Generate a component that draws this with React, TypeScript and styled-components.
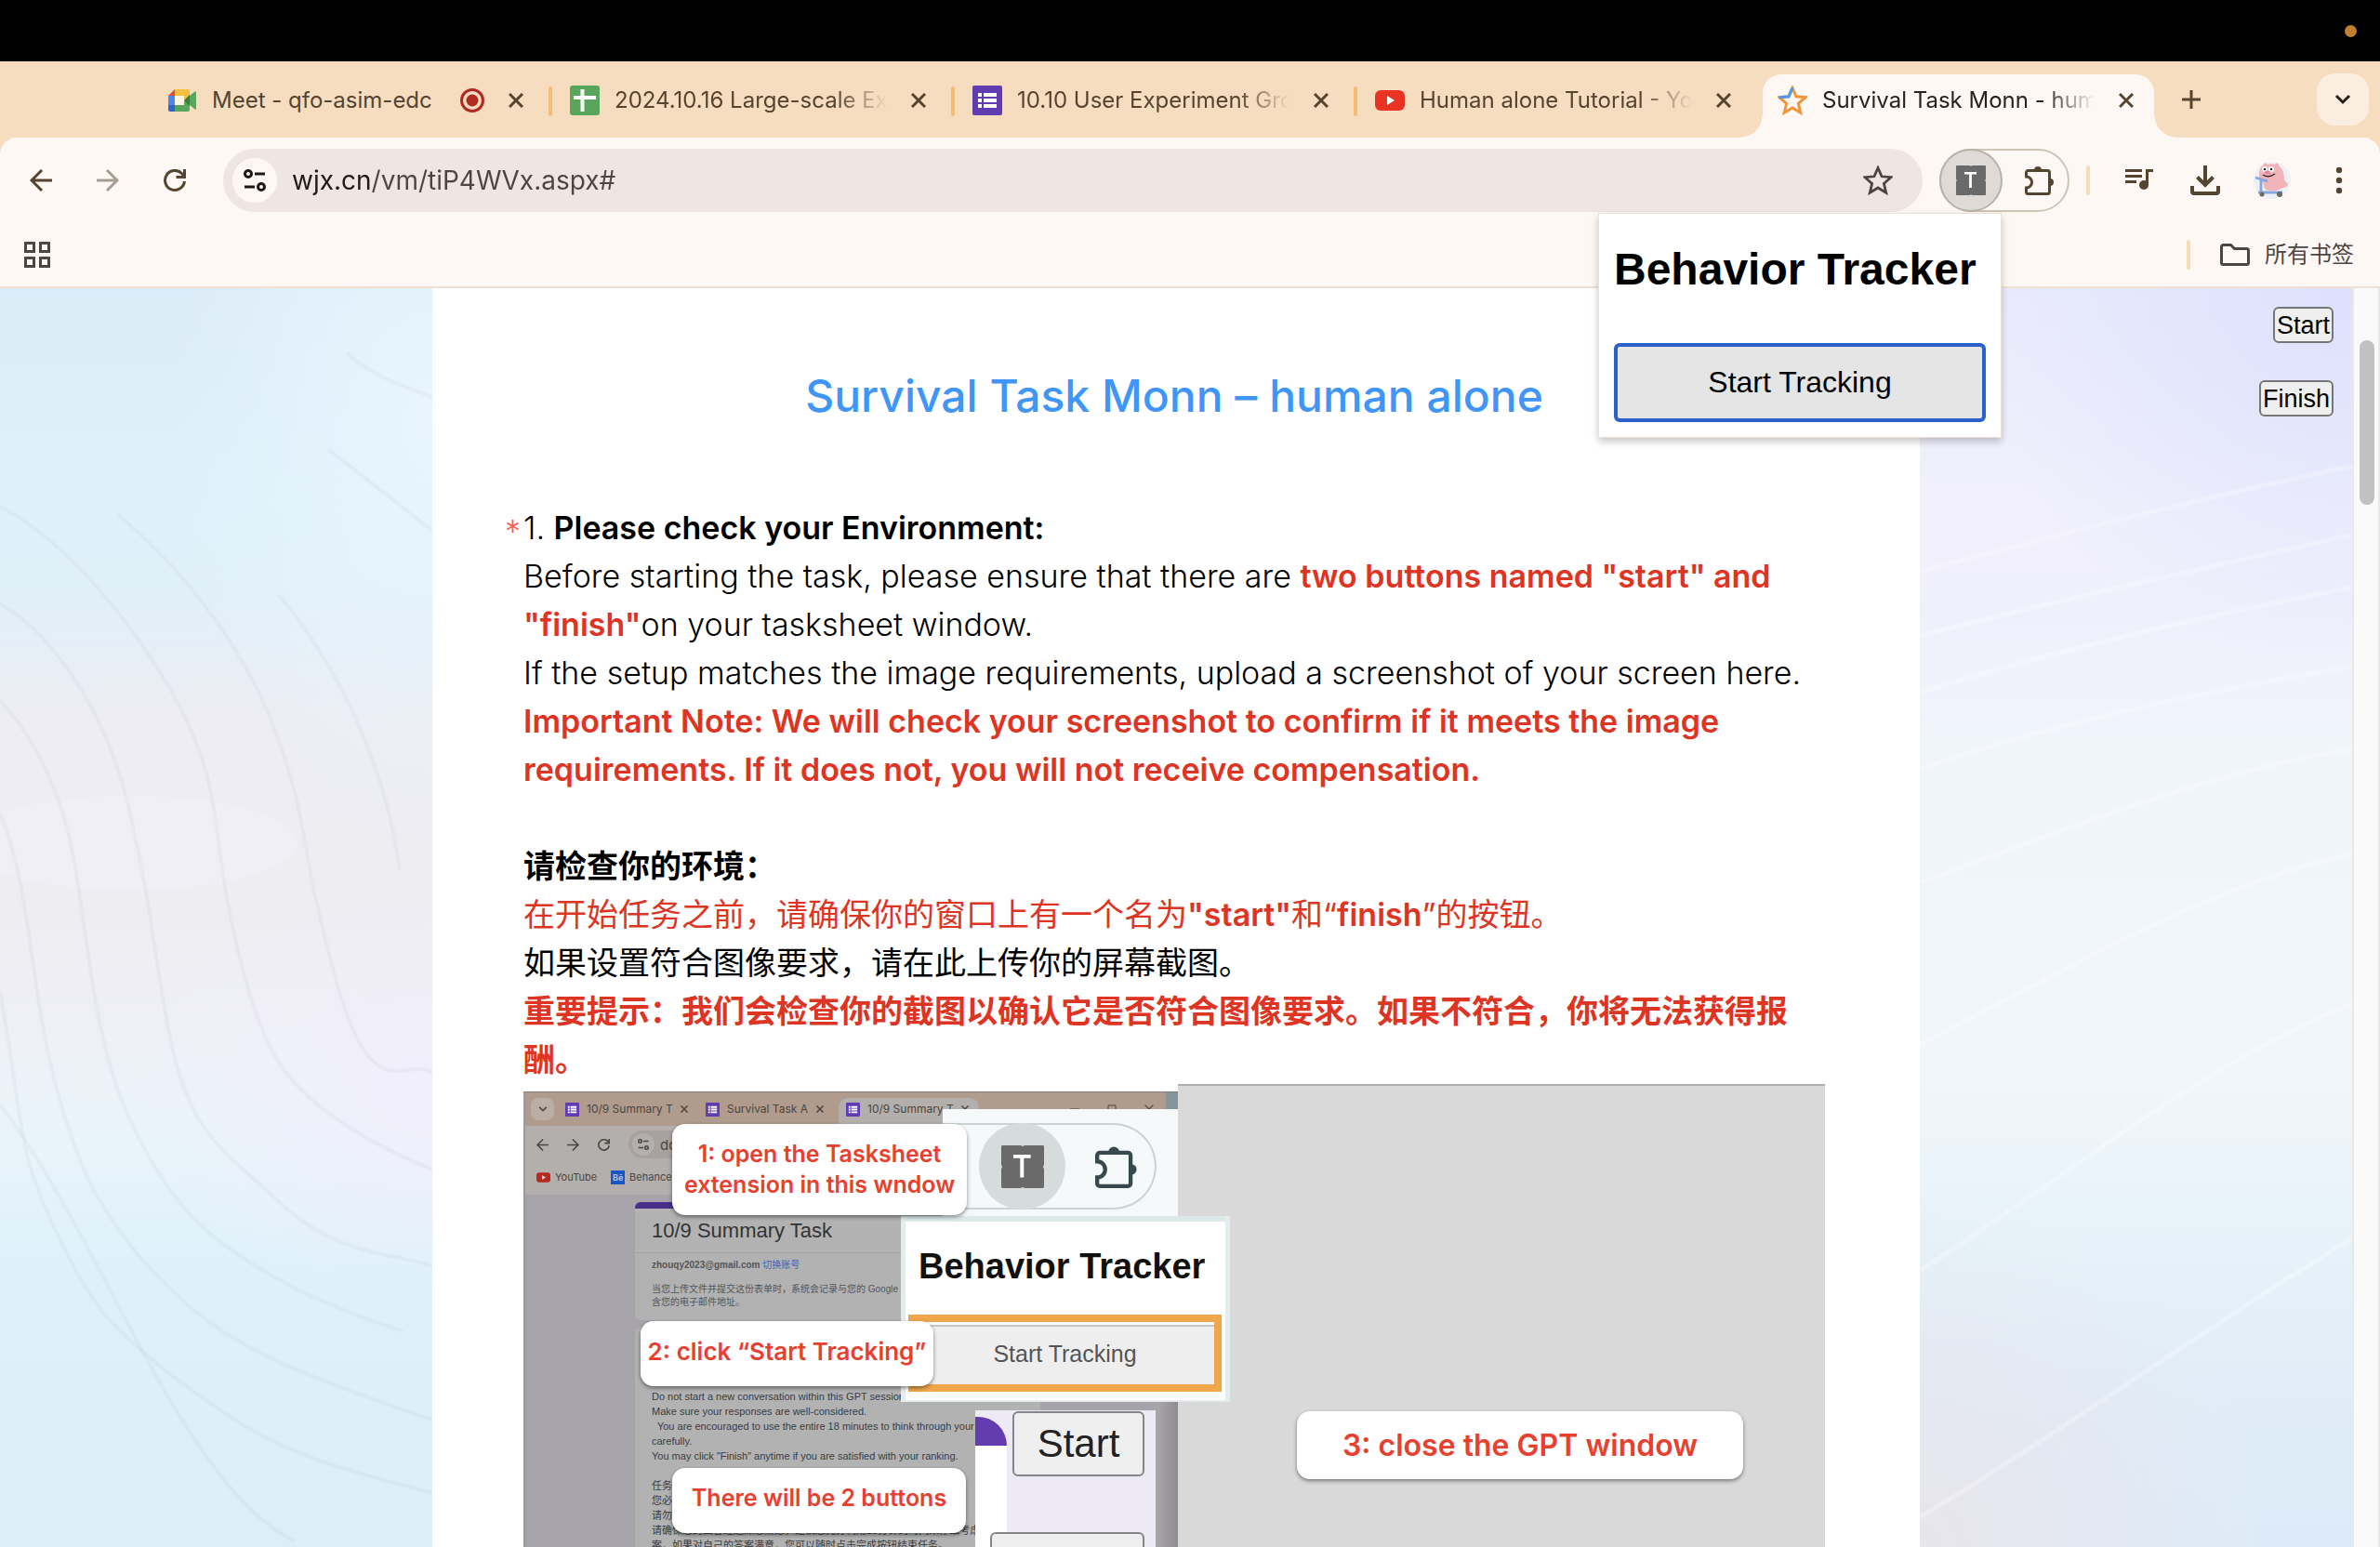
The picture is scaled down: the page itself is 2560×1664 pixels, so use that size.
import React from "react";
import styled, { createGlobalStyle, css } from "styled-components";

const ui = `Inter, "Noto Sans CJK SC", sans-serif`;
const arial = `"Liberation Sans", "Noto Sans CJK SC", sans-serif`;
const cream = "#fdf8f4";
const peach = "#f7ddc0";
const brown = "#554430";
const red = "#de3424";

const Global = createGlobalStyle`
  *, *::before, *::after { box-sizing: border-box; }
  body { margin: 0; background: #fff; font-family: ${ui}; }
  button, input { font: inherit; color: inherit; margin: 0; }
  svg { display: block; flex: none; }
  p, h1, h2 { margin: 0; }
`;

/* ---------- window shell ---------- */

const Window = styled.div`
  height: 100vh;
  display: flex;
  flex-direction: column;
  overflow: hidden;
`;

const MenuBar = styled.header`
  flex: none;
  height: 66px;
  padding: 0 25px;
  display: flex;
  align-items: center;
  justify-content: flex-end;
  background: #000;
`;

const RecordingDot = styled.span`
  width: 13px;
  height: 13px;
  border-radius: 50%;
  background: #c08030;
`;

const IconButton = styled.button`
  flex: none;
  padding: 0;
  border: 0;
  background: none;
  color: ${brown};
  display: flex;
  align-items: center;
  justify-content: center;
  &:disabled {
    opacity: 0.5;
  }
`;

/* ---------- tab strip ---------- */

const TabStrip = styled.nav`
  flex: none;
  height: 82px;
  padding: 0 12px 0 158px;
  display: flex;
  align-items: center;
  background: ${peach};
`;

const Tab = styled.div<{ $active?: boolean; $divided?: boolean }>`
  position: relative;
  z-index: 0;
  flex: 0 1 433px;
  min-width: 0;
  height: 100%;
  padding: 2px 28px 0 22px;
  display: flex;
  align-items: center;
  color: ${(p) => (p.$active ? "#2a211a" : brown)};
  ${(p) =>
    p.$divided &&
    css`
      &::before {
        content: "";
        position: absolute;
        left: -1px;
        top: 27px;
        width: 4px;
        height: 32px;
        border-radius: 2px;
        background: #f5bb77;
      }
    `}
  ${(p) =>
    p.$active &&
    css`
      &::before {
        content: "";
        position: absolute;
        z-index: -1;
        inset: 14px 6px 0 6px;
        border-radius: 20px 20px 0 0;
        background: ${cream};
      }
      &::after {
        content: "";
        position: absolute;
        z-index: -1;
        inset: auto -18px 0 -18px;
        height: 24px;
        background:
          radial-gradient(circle at 0 0, transparent 23px, ${cream} 24px) left / 24px 24px no-repeat,
          radial-gradient(circle at 100% 0, transparent 23px, ${cream} 24px) right / 24px 24px no-repeat;
      }
    `}
`;

const TabTitle = styled.span<{ $fade: boolean }>`
  flex: 1;
  min-width: 0;
  margin: 0 ${(p) => (p.$fade ? 26 : 16)}px 0 16px;
  overflow: hidden;
  white-space: nowrap;
  font-size: 24px;
  line-height: 32px;
  mask-image: ${(p) => (p.$fade ? "linear-gradient(to right, #000 calc(100% - 56px), transparent)" : "none")};
`;

const TabStatus = styled.span`
  margin-right: 26px;
`;

const NewTab = styled(IconButton)`
  margin-left: 24px;
`;

const TabSearch = styled(IconButton)`
  width: 56px;
  height: 56px;
  margin-left: auto;
  border-radius: 20px;
  background: #fbeee1;
  color: #2a211a;
`;

/* ---------- toolbar ---------- */

const Chrome = styled.div`
  flex: none;
  background: linear-gradient(${peach} 24px, ${cream} 24px);
`;

const Toolbar = styled.div`
  height: 92px;
  padding: 0 28px 0 32px;
  display: flex;
  align-items: center;
  border-radius: 18px 18px 0 0;
  background: ${cream};
`;

const NavButtons = styled.div`
  display: flex;
  gap: 48px;
  margin-right: 40px;
`;

const AddressBar = styled.form`
  flex: 1;
  min-width: 0;
  height: 68px;
  padding: 0 32px 0 10px;
  display: flex;
  align-items: center;
  border-radius: 34px;
  background: #efe6e3;
`;

const SiteInfo = styled(IconButton)`
  width: 48px;
  height: 48px;
  border-radius: 50%;
  background: ${cream};
  color: #1f1a17;
`;

const Address = styled.input`
  flex: 1;
  min-width: 0;
  padding: 0 0 0 16px;
  border: 0;
  outline: 0;
  font-size: 28px;
  line-height: 40px;
  color: transparent;
  background: linear-gradient(to right, #1f1a17 100px, #4d4541 100px);
  background-clip: text;
`;

const Extensions = styled.div`
  position: relative;
  width: 140px;
  height: 68px;
  margin: 0 18px;
  display: flex;
  border-radius: 34px;
  border: 2px solid #cfc4b8;
`;

const ExtensionButton = styled(IconButton)`
  width: 68px;
  height: 68px;
  margin: -2px 24px 0 -2px;
  border-radius: 50%;
  border: 2px solid #bab2a8;
  background: #dfdad6;
`;

const Divider = styled.span`
  flex: none;
  width: 4px;
  height: 32px;
  border-radius: 2px;
  background: #f7dcb8;
`;

const Actions = styled.div`
  display: flex;
  align-items: center;
  gap: 36px;
  margin-left: 38px;
`;

const MenuButton = styled(IconButton)`
  width: 32px;
`;

const BookmarkBar = styled.div`
  height: 70px;
  padding: 0 28px 0 26px;
  display: flex;
  align-items: center;
  background: ${cream};
  border-bottom: 2px solid #f0e0d4;
`;

const AllBookmarks = styled(IconButton)`
  gap: 16px;
  margin-left: 32px;
  font-size: 24px;
  line-height: 32px;
  color: #4d4541;
`;

const Spacer = styled.span`
  flex: 1;
`;

/* ---------- extension popup ---------- */

const Popup = styled.section`
  position: absolute;
  z-index: 5;
  top: 67px;
  left: -369px;
  width: 434px;
  height: 242px;
  padding: 32px 16px 16px;
  display: flex;
  flex-direction: column;
  justify-content: space-between;
  background: #fff;
  border: 1px solid #f0e0d4;
  box-shadow: 0 4px 8px rgba(0, 0, 0, 0.22);
  font-family: ${arial};
`;

const PopupTitle = styled.h2`
  font-size: 48px;
  line-height: 56px;
  font-weight: 700;
  white-space: nowrap;
  color: #000;
`;

const TrackButton = styled.button`
  width: 100%;
  height: 85px;
  border: 4px solid #2a60cc;
  border-radius: 6px;
  background: #e5e5e5;
  font-size: 32px;
  color: #000;
`;

/* ---------- page ---------- */

const Page = styled.div`
  flex: 1;
  min-height: 0;
  display: flex;
  overflow: hidden;
`;

const Side = styled.aside<{ $right?: boolean }>`
  position: relative;
  flex: 1;
  min-width: 0;
  padding: 20px 20px 0;
  display: flex;
  flex-direction: column;
  align-items: flex-end;
  gap: 40px;
  background: ${(p) =>
    p.$right
      ? `radial-gradient(ellipse 80% 28% at 0 100%, #e8e5ec, rgba(232, 229, 236, 0)),
         radial-gradient(ellipse 90% 30% at 100% 0, #dde1fc, rgba(221, 225, 252, 0)),
         linear-gradient(#eaebfc, #f1f0fc 17%, #f0f0fc 26%, #f0f5fb 38%, #f1f6fb 62%, #e6f2f9 76%, #dfecf8 90%, #ddebf8)`
      : `radial-gradient(ellipse 70% 16% at 100% 64%, #f1eefb, rgba(241, 238, 251, 0)),
         radial-gradient(ellipse 60% 34% at 100% 10%, #e8f5fe, rgba(232, 245, 254, 0)),
         linear-gradient(#dcecf8, #def1fa 17%, #e0f0f9 24%, #ededf3 34%, #eeedf2 50%, #eff0f6 58%, #e8f4fa 68%, #def1fb 78%, #dceef8)`};
`;

const Waves = styled.svg`
  position: absolute;
  inset: 0;
  width: 100%;
  height: 100%;
  path {
    fill: none;
    vector-effect: non-scaling-stroke;
  }
`;

const RecordButton = styled.button`
  position: relative;
  height: 39px;
  padding: 0 2px;
  border: 2px solid #767676;
  border-radius: 6px;
  background: #efefef;
  font-family: ${arial};
  font-size: 27px;
  line-height: 32px;
  color: #000;
`;

const Sheet = styled.main`
  flex: 0 1 1600px;
  min-width: 0;
  padding: 86px 102px 0 98px;
  background: #fff;
`;

const SheetTitle = styled.h1`
  margin-bottom: 86px;
  text-align: center;
  font-size: 48px;
  line-height: 60px;
  font-weight: 500;
  color: #4096f8;
`;

const Question = styled.div`
  position: relative;
  font-size: 34px;
  line-height: 52px;
  font-weight: 350;
  color: #000;
`;

const Required = styled.span`
  position: absolute;
  left: -20px;
  top: 4px;
  color: #f56056;
`;

const Chinese = styled.p`
  font-weight: 400;
`;

const Strong = styled.strong<{ $red?: boolean }>`
  font-weight: 600;
  color: ${(p) => (p.$red ? red : "inherit")};
`;

const Red = styled.span`
  color: ${red};
`;

const ScrollTrack = styled.div`
  flex: none;
  width: 30px;
  padding: 56px 4px 0 6px;
  background: #fafafa;
  border: solid #e8e8e8;
  border-width: 0 2px;
`;

const ScrollThumb = styled.div`
  width: 16px;
  height: 177px;
  border-radius: 8px;
  background: #c1c1c1;
`;

/* ---------- instruction figure ---------- */

const Figure = styled.figure`
  position: relative;
  height: 720px;
  margin: 0;
  display: flex;
  align-items: flex-start;
  overflow: hidden;
`;

const Shot = styled.div`
  flex: 0 0 704px;
  height: 712px;
  margin-top: 8px;
  display: flex;
  flex-direction: column;
  border-top: 1px solid #7d7a78;
  border-left: 2px solid #9c9a9e;
  background: linear-gradient(to right, #a7a3aa 678px, #a7a7a7 680px, #8f8a92 702px);
`;

const GptWindow = styled.div`
  flex: 1;
  height: 720px;
  border-top: 2px solid #aeaeae;
  background: #d9d9d9;
`;

const ShotTabs = styled.div`
  height: 36px;
  padding: 0 26px 0 6px;
  display: flex;
  align-items: center;
  background: linear-gradient(to right, #b09b8c 689px, #87959a 689px);
  color: #4c443f;
  font-size: 12px;
  line-height: 16px;
`;

const ShotChevron = styled.span`
  width: 25px;
  height: 24px;
  margin-right: 4px;
  display: flex;
  align-items: center;
  justify-content: center;
  border-radius: 8px;
  background: #bbaea5;
`;

const ShotTab = styled.span<{ $active?: boolean }>`
  width: 151px;
  height: 30px;
  margin-top: 6px;
  padding: 0 16px 6px 8px;
  display: flex;
  align-items: center;
  gap: 8px;
  border-radius: 10px 10px 0 0;
  background: ${(p) => (p.$active ? "#b3afac" : "none")};
  span {
    flex: 1;
    white-space: nowrap;
  }
`;

const ShotWindowControls = styled.span`
  display: flex;
  align-items: center;
  gap: 30px;
  margin-left: auto;
`;

const ShotToolbar = styled.div`
  height: 74px;
  display: grid;
  grid-template-rows: 40px 30px;
  align-items: center;
  background: #b3afac;
  color: #4b4540;
  font-size: 11px;
`;

const ShotRow = styled.div<{ $gap: number }>`
  display: flex;
  align-items: center;
  gap: ${(p) => p.$gap}px;
  padding-left: 12px;
`;

const ShotAddress = styled.span`
  width: 260px;
  height: 30px;
  padding-left: 4px;
  display: flex;
  align-items: center;
  gap: 6px;
  border-radius: 15px;
  background: #a9a19f;
  font-size: 15px;
`;

const ShotTune = styled.span`
  width: 24px;
  height: 24px;
  display: flex;
  align-items: center;
  justify-content: center;
  border-radius: 50%;
  background: #b3afac;
`;

const ShotLabel = styled.span`
  display: flex;
  align-items: center;
  gap: 5px;
`;

const ShotCard = styled.div<{ $first?: boolean }>`
  width: 436px;
  margin: 8px 0 0 118px;
  border-radius: 6px;
  background: #b2b2b2;
  border-top: ${(p) => (p.$first ? "7px solid #48308a" : "0")};
  font-family: ${arial};
  color: #55555a;
`;

const ShotTitle = styled.p`
  height: 48px;
  padding-left: 18px;
  border-bottom: 1px solid #a2a2a2;
  font-size: 22px;
  line-height: 48px;
  color: #333;
`;

const ShotAccount = styled.div`
  height: 72px;
  padding: 6px 18px 0;
  font-size: 10px;
  line-height: 14px;
  white-space: nowrap;
  p:first-child {
    margin-bottom: 12px;
  }
  i {
    font-style: normal;
    color: #3f62b8;
  }
`;

const ShotBody = styled.div`
  padding: 66px 0 0 18px;
  height: 440px;
  font-size: 11px;
  line-height: 16px;
  white-space: pre;
  color: #3c3c40;
`;

/* pieces pasted over the screenshot, at free positions on the canvas */
const Piece = styled.div<{ $x: number; $y: number; $w: number; $h: number }>`
  position: absolute;
  left: ${(p) => p.$x}px;
  top: ${(p) => p.$y}px;
  width: ${(p) => p.$w}px;
  height: ${(p) => p.$h}px;
`;

const ToolbarPiece = styled(Piece)`
  padding: 15px 0;
  background: #f5f9fa;
`;

const PiecePill = styled.div`
  width: 230px;
  height: 93px;
  padding-left: 39px;
  display: flex;
  align-items: center;
  gap: 40px;
  border: 2px solid #ccd3d3;
  border-left: 0;
  border-radius: 0 47px 47px 0;
  color: #37494c;
`;

const PieceCircle = styled.span`
  flex: none;
  width: 93px;
  height: 93px;
  margin-right: -8px;
  display: flex;
  align-items: center;
  justify-content: center;
  border-radius: 50%;
  background: #d6dcdc;
`;

const PopupPiece = styled(Piece)`
  padding: 20px 8px 0;
  border: solid #e4eced;
  border-width: 0 5px 2px;
  background: linear-gradient(#dce9e9 6px, #fff 6px);
  font-family: ${arial};
`;

const PieceTitle = styled.p`
  padding-left: 6px;
  font-size: 38px;
  line-height: 68px;
  font-weight: 700;
  white-space: nowrap;
  color: #111;
`;

const PieceButton = styled.div`
  height: 83px;
  margin: 18px -4px 0 -5px;
  border: 8px solid #f0a64a;
  background: #eee;
  box-shadow: inset 0 3px 0 #fff, inset 0 5px 0 #c4c4c4;
  font-size: 25px;
  line-height: 68px;
  text-align: center;
  color: #555;
`;

const ButtonsPiece = styled(Piece)`
  display: flex;
  background: #edeaf6;
`;

const PieceSheet = styled.div`
  flex: none;
  width: 34px;
  display: flex;
  flex-direction: column;
  padding-top: 7px;
`;

const PieceBanner = styled.span`
  height: 31px;
  border-radius: 0 32px 0 0;
  background: #633cb0;
`;

const PiecePaper = styled.span`
  flex: 1;
  background: #fff;
`;

const PieceButtons = styled.div`
  flex: 1;
  min-width: 0;
  margin: 1px 12px 0 6px;
  display: flex;
  flex-direction: column;
  align-items: flex-end;
  gap: 60px;
`;

const PieceKey = styled.div<{ $w: number }>`
  flex: none;
  width: ${(p) => p.$w}px;
  height: 70px;
  border: 2px solid #85858a;
  border-radius: 6px;
  background: #efefef;
  font-family: ${arial};
  font-size: 42px;
  line-height: 66px;
  text-align: center;
  color: #222;
`;

const Callout = styled(Piece)<{ $size: number; $raised?: boolean }>`
  display: flex;
  align-items: center;
  justify-content: center;
  padding-bottom: ${(p) => (p.$raised ? 6 : 0)}px;
  border-radius: 14px;
  background: #fff;
  box-shadow: 0 2px 4px rgba(0, 0, 0, 0.45);
  font-size: ${(p) => p.$size}px;
  line-height: 33px;
  font-weight: 600;
  text-align: center;
  white-space: pre;
  color: #e8402f;
`;

/* ---------- icons ---------- */

const Stroke = ({ size, box = 24, w, d }: { size: number; box?: number; w: number; d: string }) => (
  <svg width={size} height={size} viewBox={`0 0 ${box} ${box}`} fill="none" stroke="currentColor" strokeWidth={w}>
    <path d={d} />
  </svg>
);

const Cross = ({ size = 16, w = 3 }) => <Stroke size={size} box={16} w={w} d="M1 1l14 14M15 1L1 15" />;
const Back = ({ size = 24 }) => <Stroke size={size} w={3} d="M24 12H3M13 1L2 12l11 11" />;
const Forward = ({ size = 24 }) => <Stroke size={size} w={3} d="M0 12h21M11 1l11 11-11 11" />;
const Reload = ({ size = 24 }) => <Stroke size={size} w={3} d="M22.500 13a10.500 10.500 0 1 1-3-8.500l3 3.500M22.500 0v8.500h-9" />;
const Chevron = ({ size = 18 }) => <Stroke size={size} box={18} w={3} d="M2 5l7 7 7-7" />;

const Puzzle = ({ size = 32 }) => (
  <svg width={size} height={size} viewBox="0 0 32 32">
    <path
      d="M3.500 5.500h21a2 2 0 0 1 2 2v21a2 2 0 0 1-2 2h-21a2 2 0 0 1-2-2v-4.500a6 6 0 0 0 0-12v-4.500a2 2 0 0 1 2-2z"
      fill="none"
      stroke="currentColor"
      strokeWidth="3"
    />
    <path d="M10 5a4 4 0 0 1 8 0zM27 14a4 4 0 0 1 0 8z" fill="currentColor" />
  </svg>
);

const TBadge = ({ size = 32 }) => (
  <svg width={size} height={size} viewBox="0 0 32 32">
    <rect width="32" height="32" rx="1" fill="#6a6a6a" />
    <path d="M15 0h2v.6h-2zM15 31.400h2v.6h-2zM0 15h.6v2H0zM31.400 15h.6v2h-.6z" fill="#dfdad6" />
    <path d="M9 7h13v2.600h-5.100V24h-2.800V9.600H9z" fill="#fff" />
  </svg>
);

const Tune = ({ size = 24 }) => (
  <svg width={size} height={size} viewBox="0 0 24 24" fill="none" stroke="currentColor" strokeWidth="3">
    <circle cx="5" cy="5" r="3.500" />
    <path d="M12 5h11M1 19h11" />
    <circle cx="19" cy="19" r="3.500" />
  </svg>
);

const MeetIcon = () => (
  <svg width="32" height="32" viewBox="0 0 32 32">
    <path d="M8 4v7H1z" fill="#e2483d" />
    <path d="M8 4h14a2 2 0 0 1 2 2v6l-6 4v-5H8z" fill="#f5bf42" />
    <path d="M1 11h7v10H1z" fill="#4f86ec" />
    <path d="M1 21h7v7H3a2 2 0 0 1-2-2z" fill="#2f62cd" />
    <path d="M8 21h10v-5l6 4v6a2 2 0 0 1-2 2H8z" fill="#58a65c" />
    <path d="M18 16l6-6v12z" fill="#3b7c40" />
    <path d="M24 11l5-4a1 1 0 0 1 2 1v16a1 1 0 0 1-2 1l-5-4z" fill="#58a65c" />
    <path d="M8 11h10v10H8z" fill="#fdf3e6" />
  </svg>
);

const RecordIcon = () => (
  <svg width="26" height="26" viewBox="0 0 26 26">
    <circle cx="13" cy="13" r="11.500" fill="none" stroke="#b02a22" strokeWidth="3" />
    <circle cx="13" cy="13" r="6.500" fill="#b02a22" />
  </svg>
);

const SheetsIcon = () => (
  <svg width="32" height="32" viewBox="0 0 32 32">
    <rect width="32" height="32" rx="3" fill="#58a65c" />
    <path d="M11.500 4h4v7H28v4H15.500v13h-4V15H4v-4h7.500z" fill="#fff" />
  </svg>
);

const FormsIcon = ({ size = 32 }) => (
  <svg width={size} height={size} viewBox="0 0 32 32">
    <rect width="32" height="32" rx="2" fill="#613cb0" />
    <path d="M6 8h4v4H6zM12 8h14v4H12zM6 14h4v4H6zM12 14h14v4H12zM6 20h4v4H6zM12 20h14v4H12z" fill="#fff" />
  </svg>
);

const YoutubeIcon = ({ size = 32, fill = "#ea3323" }) => (
  <svg width={size} height={size} viewBox="0 0 32 32">
    <rect y="5" width="32" height="22" rx="6" fill={fill} />
    <path d="M13 11l8 5-8 5z" fill="#fff" />
  </svg>
);

const star = "M16 2.500l4 9.300 10 .9-7.600 6.700 2.300 9.900L16 24l-8.700 5.300 2.300-9.900L2 12.700l10-.9z";

const WjxIcon = () => (
  <svg width="32" height="32" viewBox="0 0 32 32" fill="none" strokeWidth="3">
    <path d={star} stroke="#f0953a" />
    <path d="M2 12.700l10-.9 4-9.300" stroke="#4a9af0" />
  </svg>
);

const StarIcon = () => (
  <svg width="32" height="32" viewBox="0 0 32 32" fill="none" stroke="#4d4541" strokeWidth="2.800">
    <path d={star} />
  </svg>
);

const MusicIcon = () => (
  <svg width="34" height="32" viewBox="0 0 34 32" fill="currentColor">
    <path d="M0 4h18v3H0zM0 10h18v3H0zM0 16h12v3H0zM20 4h10v3h-5v14h-3V4z" />
    <circle cx="20" cy="21" r="5" />
  </svg>
);

const DownloadIcon = () => (
  <svg width="32" height="32" viewBox="0 0 32 32" fill="none" stroke="currentColor" strokeWidth="4">
    <path d="M16 0v20M7.500 12.500L16 21l8.500-8.500M2 22v6a2 2 0 0 0 2 2h24a2 2 0 0 0 2-2v-6" />
  </svg>
);

const PigAvatar = () => (
  <svg width="40" height="40" viewBox="0 0 40 40">
    <circle cx="20" cy="20" r="20" fill="#eef1f5" />
    <path
      d="M10 4c1-3 4-3 5-1 3-1 6-1 8 0 1-2 4-2 4 1 5 4 6 10 6 16l4 4c-1 3-3 4-6 4-3 3-8 3-13 3-4 0-7-2-7-6 0-3-5-4-5-10 0-5 1-9 4-11z"
      fill="#f1b4b8"
    />
    <circle cx="12" cy="8" r="3" fill="#fff" />
    <circle cx="19" cy="8" r="3" fill="#fff" />
    <circle cx="12" cy="8" r="1.300" fill="#222" />
    <circle cx="19" cy="8" r="1.300" fill="#222" />
    <ellipse cx="15" cy="11.500" rx="3" ry="2" fill="#e58990" />
    <path d="M10 14q6 4 13-1" fill="none" stroke="#3a2a2a" strokeWidth="1.500" />
    <path d="M2 17l13 4M8 20v13M5 33h26" fill="none" stroke="#86a6e4" strokeWidth="2.800" />
    <circle cx="9" cy="35" r="2.500" fill="#6d6a60" />
    <circle cx="28" cy="35" r="3" fill="#6d6a60" />
  </svg>
);

const DotsIcon = () => (
  <svg width="8" height="32" viewBox="0 0 8 32" fill="currentColor">
    <circle cx="4" cy="5" r="3.200" />
    <circle cx="4" cy="16" r="3.200" />
    <circle cx="4" cy="27" r="3.200" />
  </svg>
);

const AppsIcon = () => (
  <svg width="28" height="28" viewBox="0 0 28 28" fill="none" stroke="#4d4541" strokeWidth="3">
    <path d="M1.500 1.500h9v9h-9zM17.500 1.500h9v9h-9zM1.500 17.500h9v9h-9zM17.500 17.500h9v9h-9z" />
  </svg>
);

const FolderIcon = () => (
  <svg width="32" height="24" viewBox="0 0 32 24" fill="none" stroke="#4d4541" strokeWidth="3">
    <path d="M3.500 1.500h8l4 4h13a2 2 0 0 1 2 2v13a2 2 0 0 1-2 2h-25a2 2 0 0 1-2-2v-17a2 2 0 0 1 2-2z" />
  </svg>
);

const BehanceIcon = () => (
  <svg width="15" height="15" viewBox="0 0 15 15">
    <rect width="15" height="15" fill="#1a56c8" />
    <text x="2" y="11" fontSize="9" fontWeight="700" fill="#b8c4dc">
      Bē
    </text>
  </svg>
);

/* ---------- data ---------- */

const tabs = [
  { icon: <MeetIcon />, title: "Meet - qfo-asim-edc", recording: true },
  { icon: <SheetsIcon />, title: "2024.10.16 Large-scale Ex" },
  { icon: <FormsIcon />, title: "10.10 User Experiment Gro" },
  { icon: <YoutubeIcon />, title: "Human alone Tutorial - Yo" },
  { icon: <WjxIcon />, title: "Survival Task Monn - hum", active: true },
];

const leftWaves = [
  "M0 270C200 310 400 400 540 490S690 640 710 700S790 880 880 945S1200 1060 1395 1090",
  "M0 390C180 430 350 530 420 650S480 780 540 910S700 1060 900 1130S1250 1190 1395 1210",
  "M0 510C100 550 200 620 240 710S290 860 340 940S520 1120 680 1170S1050 1260 1300 1290",
  "M0 650C60 700 90 790 120 870S190 1010 260 1080S500 1230 680 1280S1100 1360 1395 1400",
  "M0 870C30 930 50 1000 80 1060S250 1230 340 1270S560 1350 760 1400S1200 1470 1395 1490",
  "M0 1010C200 1110 400 1280 540 1370S800 1520 950 1550",
  "M380 280C600 350 800 450 900 560S960 680 1080 850S1300 950 1395 970",
  "M900 380C1100 470 1250 600 1290 720",
  "M1120 80C1200 110 1300 120 1395 135",
  "M1060 200C1180 235 1280 265 1395 300",
];

const rightWaves = [
  "M0 350C400 310 900 260 1395 220",
  "M0 430C500 380 1000 340 1395 305",
  "M0 500C500 440 1000 400 1395 370",
  "M0 595C400 540 900 500 1395 468",
  "M0 735C400 680 900 600 1395 570",
  "M0 935C400 860 900 740 1395 700",
  "M0 1215C400 1120 900 960 1395 885",
  "M0 1520C400 1430 900 1290 1395 1175",
];

const shotLines = [
  "Do not start a new conversation within this GPT session.",
  "Make sure your responses are well-considered.",
  "  You are encouraged to use the entire 18 minutes to think through your a",
  "carefully.",
  'You may click "Finish" anytime if you are satisfied with your ranking.',
  "",
  "任务说明",
  "您必完成",
  "请勿在此",
  "请确保您的回答经过深思熟虑，建议您充分利用18分钟的时间来仔细考虑",
  "案，如果对自己的答案满意，您可以随时点击完成按钮结束任务。",
];

export default function App() {
  return (
    <Window>
      <Global />
      <MenuBar>
        <RecordingDot />
      </MenuBar>

      <TabStrip>
        {tabs.map((t, i) => (
          <Tab key={t.title} $active={t.active} $divided={i > 0 && !t.active}>
            {t.icon}
            <TabTitle $fade={!t.recording}>{t.title}</TabTitle>
            {t.recording && (
              <TabStatus>
                <RecordIcon />
              </TabStatus>
            )}
            <IconButton aria-label="Close tab">
              <Cross />
            </IconButton>
          </Tab>
        ))}
        <NewTab aria-label="New tab">
          <Stroke size={20} box={20} w={3} d="M10 0v20M0 10h20" />
        </NewTab>
        <TabSearch aria-label="Search tabs">
          <Chevron />
        </TabSearch>
      </TabStrip>

      <Chrome>
        <Toolbar>
          <NavButtons>
            <IconButton aria-label="Back">
              <Back />
            </IconButton>
            <IconButton aria-label="Forward" disabled>
              <Forward />
            </IconButton>
            <IconButton aria-label="Reload">
              <Reload />
            </IconButton>
          </NavButtons>
          <AddressBar>
            <SiteInfo type="button" aria-label="Site information">
              <Tune />
            </SiteInfo>
            <Address aria-label="Address" defaultValue="wjx.cn/vm/tiP4WVx.aspx#" />
            <IconButton type="button" aria-label="Bookmark this page">
              <StarIcon />
            </IconButton>
          </AddressBar>
          <Extensions>
            <ExtensionButton aria-label="Behavior Tracker extension">
              <TBadge />
            </ExtensionButton>
            <IconButton aria-label="Extensions">
              <Puzzle />
            </IconButton>
            <Popup>
              <PopupTitle>Behavior Tracker</PopupTitle>
              <TrackButton>Start Tracking</TrackButton>
            </Popup>
          </Extensions>
          <Divider />
          <Actions>
            <IconButton aria-label="Media controls">
              <MusicIcon />
            </IconButton>
            <IconButton aria-label="Downloads">
              <DownloadIcon />
            </IconButton>
            <IconButton aria-label="Profile">
              <PigAvatar />
            </IconButton>
            <MenuButton aria-label="Menu">
              <DotsIcon />
            </MenuButton>
          </Actions>
        </Toolbar>
        <BookmarkBar>
          <IconButton aria-label="Apps">
            <AppsIcon />
          </IconButton>
          <Spacer />
          <Divider />
          <AllBookmarks>
            <FolderIcon />
            所有书签
          </AllBookmarks>
        </BookmarkBar>
      </Chrome>

      <Page>
        <Side>
          <Waves viewBox="0 0 1395 1557" preserveAspectRatio="none" stroke="rgba(190,200,214,0.16)" strokeWidth="4">
            <ellipse cx="420" cy="686" rx="540" ry="58" fill="#f1eff6" stroke="none" />
            {leftWaves.map((d) => (
              <path key={d} d={d} />
            ))}
          </Waves>
        </Side>

        <Sheet>
          <SheetTitle>Survival Task Monn – human alone</SheetTitle>
          <Question>
            <Required>*</Required>
            <p>
              1. <Strong>Please check your Environment:</Strong>
            </p>
            <p>
              Before starting the task, please ensure that there are{" "}
              <Strong $red>two buttons named "start" and "finish"</Strong>on your tasksheet window.
            </p>
            <p>If the setup matches the image requirements, upload a screenshot of your screen here.</p>
            <p>
              <Strong $red>
                Important Note: We will check your screenshot to confirm if it meets the image requirements. If it does
                not, you will not receive compensation.
              </Strong>
            </p>
            <br />
            <Chinese lang="zh-CN">
              <Strong>请检查你的环境：</Strong>
            </Chinese>
            <Chinese lang="zh-CN">
              <Red>
                在开始任务之前，请确保你的窗口上有一个名为<Strong>"start"</Strong>和“<Strong>finish</Strong>”的按钮。
              </Red>
            </Chinese>
            <Chinese lang="zh-CN">如果设置符合图像要求，请在此上传你的屏幕截图。</Chinese>
            <Chinese lang="zh-CN">
              <Strong $red>
                重要提示：我们会检查你的截图以确认它是否符合图像要求。如果不符合，你将无法获得报酬。
              </Strong>
            </Chinese>
          </Question>

          <Figure>
            <Shot>
              <ShotTabs>
                <ShotChevron>
                  <Chevron size={10} />
                </ShotChevron>
                <ShotTab>
                  <FormsIcon size={15} />
                  <span>10/9 Summary T</span>
                  <Cross size={8} />
                </ShotTab>
                <ShotTab>
                  <FormsIcon size={15} />
                  <span>Survival Task A</span>
                  <Cross size={8} />
                </ShotTab>
                <ShotTab $active>
                  <FormsIcon size={15} />
                  <span>10/9 Summary T</span>
                  <Cross size={8} />
                </ShotTab>
                <ShotWindowControls>
                  <Stroke size={10} box={10} w={1} d="M0 5h10" />
                  <Stroke size={10} box={10} w={1} d="M1 1h8v8H1z" />
                  <Cross size={10} w={2} />
                </ShotWindowControls>
              </ShotTabs>
              <ShotToolbar>
                <ShotRow $gap={20}>
                  <Back size={13} />
                  <Forward size={13} />
                  <Reload size={13} />
                  <ShotAddress>
                    <ShotTune>
                      <Tune size={12} />
                    </ShotTune>
                    docs
                  </ShotAddress>
                </ShotRow>
                <ShotRow $gap={15}>
                  <ShotLabel>
                    <YoutubeIcon size={15} fill="#b8281e" />
                    YouTube
                  </ShotLabel>
                  <ShotLabel>
                    <BehanceIcon />
                    Behance
                  </ShotLabel>
                </ShotRow>
              </ShotToolbar>
              <ShotCard $first>
                <ShotTitle>10/9 Summary Task</ShotTitle>
                <ShotAccount>
                  <p>
                    <b>zhouqy2023@gmail.com</b> <i>切换账号</i>
                  </p>
                  <p>当您上传文件并提交这份表单时，系统会记录与您的 Google 账</p>
                  <p>含您的电子邮件地址。</p>
                </ShotAccount>
              </ShotCard>
              <ShotCard>
                <ShotBody>{shotLines.join("\n")}</ShotBody>
              </ShotCard>
            </Shot>
            <GptWindow />

            <ToolbarPiece $x={451} $y={27} $w={253} $h={116}>
              <PiecePill>
                <PieceCircle>
                  <TBadge size={46} />
                </PieceCircle>
                <Puzzle size={46} />
              </PiecePill>
            </ToolbarPiece>
            <PopupPiece $x={406} $y={142} $w={354} $h={200}>
              <PieceTitle>Behavior Tracker</PieceTitle>
              <PieceButton>Start Tracking</PieceButton>
            </PopupPiece>
            <ButtonsPiece $x={486} $y={351} $w={194} $h={360}>
              <PieceSheet>
                <PieceBanner />
                <PiecePaper />
              </PieceSheet>
              <PieceButtons>
                <PieceKey $w={142}>Start</PieceKey>
                <PieceKey $w={166}>Finish</PieceKey>
              </PieceButtons>
            </ButtonsPiece>

            <Callout $x={160} $y={43} $w={317} $h={98} $size={25}>
              {"1: open the Tasksheet\nextension in this wndow"}
            </Callout>
            <Callout $x={126} $y={255} $w={315} $h={70} $size={26} $raised>
              2: click “Start Tracking”
            </Callout>
            <Callout $x={160} $y={413} $w={316} $h={70} $size={25} $raised>
              There will be 2 buttons
            </Callout>
            <Callout $x={832} $y={352} $w={480} $h={73} $size={32}>
              3: close the GPT window
            </Callout>
          </Figure>
        </Sheet>

        <Side $right>
          <Waves viewBox="0 0 1395 1557" preserveAspectRatio="none" stroke="rgba(255,255,255,0.28)" strokeWidth="5">
            {rightWaves.map((d) => (
              <path key={d} d={d} />
            ))}
          </Waves>
          <RecordButton>Start</RecordButton>
          <RecordButton>Finish</RecordButton>
        </Side>

        <ScrollTrack>
          <ScrollThumb />
        </ScrollTrack>
      </Page>
    </Window>
  );
}
